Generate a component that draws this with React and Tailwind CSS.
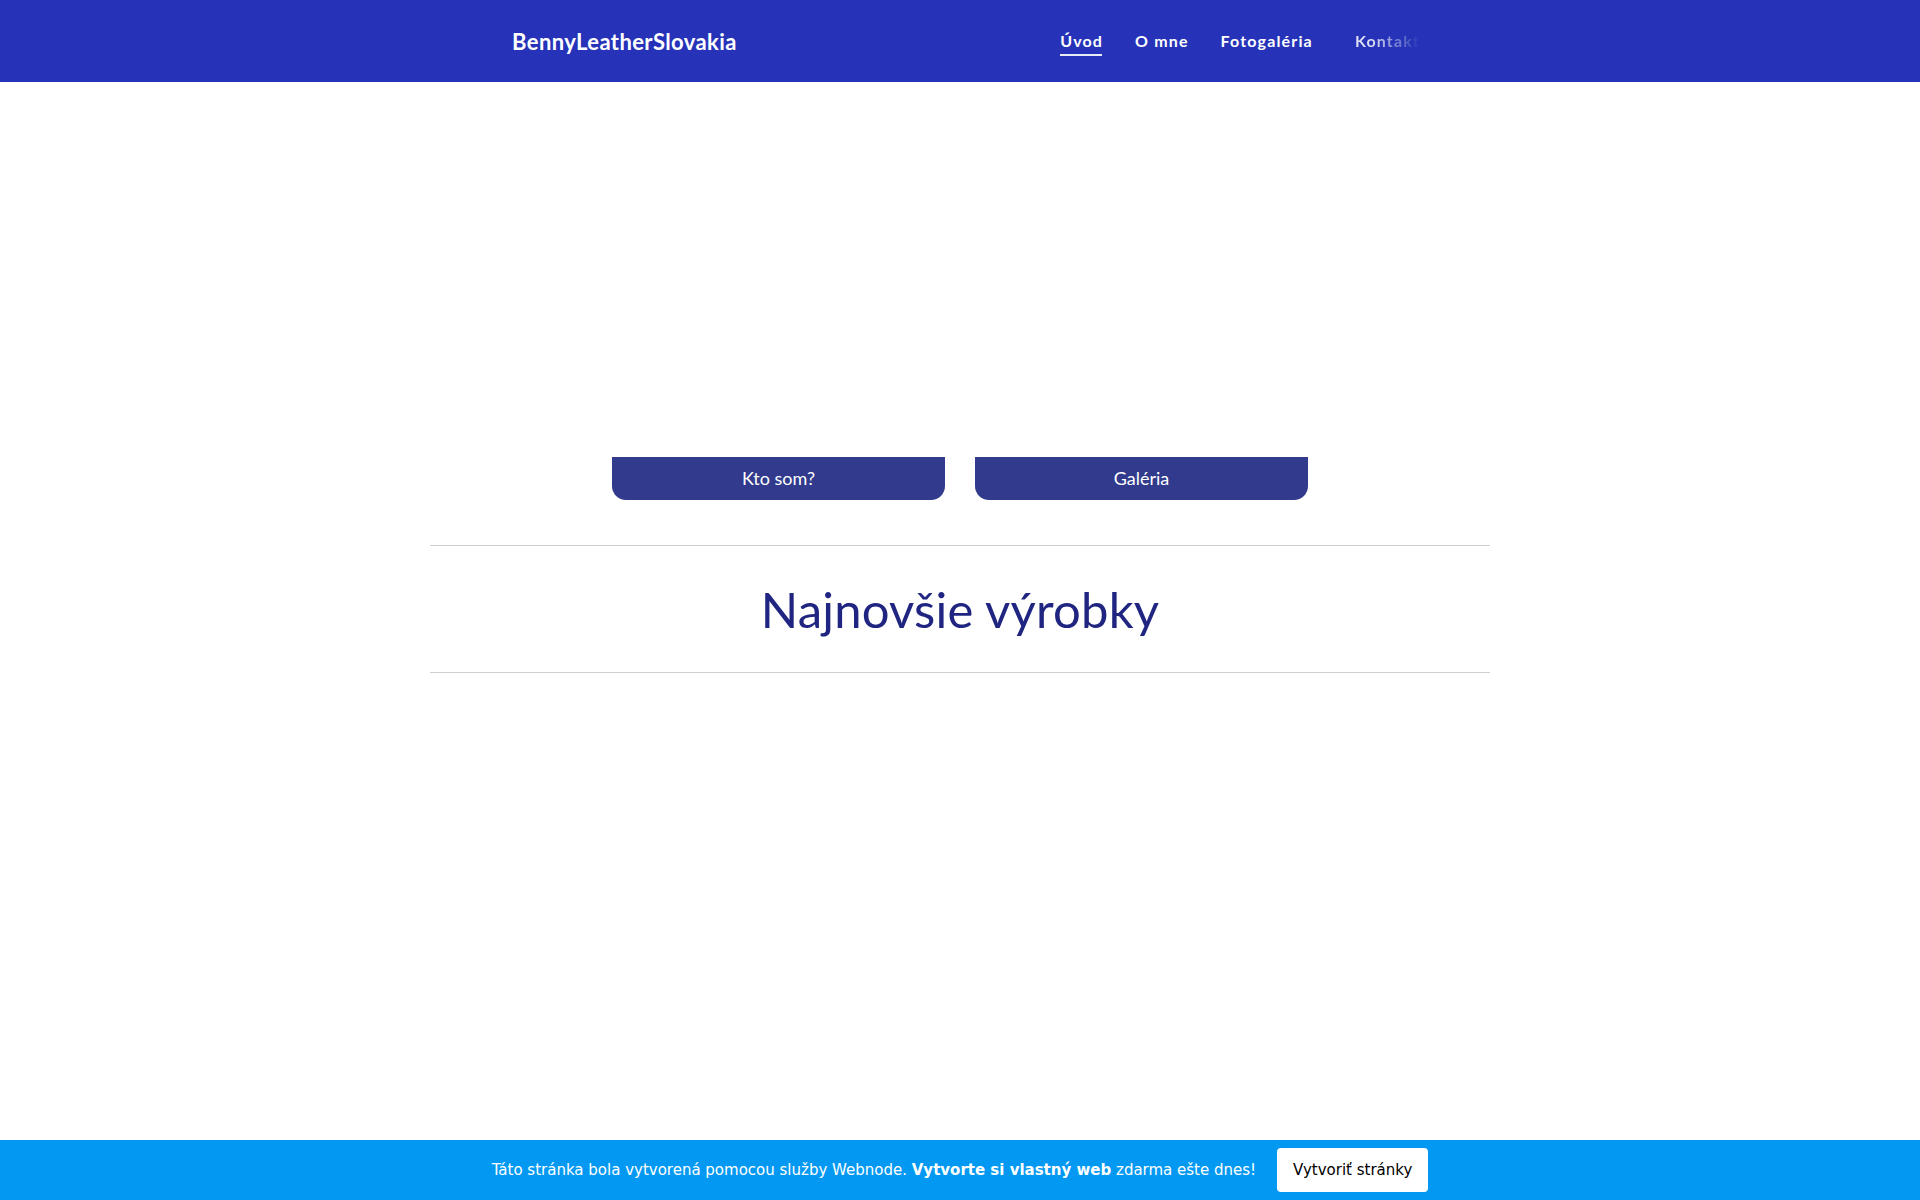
export default function App() {
  return (
    <div className="min-h-[1200px] w-full bg-white flex flex-col font-['Lato','Noto_Sans',sans-serif]">
      <header className="h-[82px] bg-[#2633b8] flex items-center">
        <div className="w-[1060px] mx-auto flex items-center pl-[82px]">
          <div className="text-white font-bold text-[22px] tracking-[0.4px]">BennyLeatherSlovakia</div>
          <nav className="ml-auto flex items-center gap-[32px] pr-[70px] text-white font-bold text-[16px] tracking-[1.15px]">
            <a className="relative">Úvod<span className="absolute left-0 right-[1px] -bottom-[3px] h-[2px] bg-white/90"></span></a>
            <a>O mne</a>
            <a className="pr-[10px]">Fotogaléria</a>
            <a className="bg-[linear-gradient(90deg,rgba(255,255,255,0.85)_25%,rgba(255,255,255,0)_100%)] bg-clip-text text-transparent">Kontakt</a>
          </nav>
        </div>
      </header>
      <main className="flex-1 flex flex-col items-center">
        <div className="h-[375px]"></div>
        <div className="flex gap-[30px]">
          <a className="w-[333px] h-[43px] bg-[#313a8c] rounded-b-[14px] flex items-center justify-center text-white text-[18px]">Kto som?</a>
          <a className="w-[333px] h-[43px] bg-[#313a8c] rounded-b-[14px] flex items-center justify-center text-white text-[18px]">Galéria</a>
        </div>
        <div className="w-[1060px] mt-[45px] border-t border-[#cfcfcf]"></div>
        <h2 className="h-[126px] flex items-center justify-center text-[#1f2580] text-[49px] leading-none tracking-[0.2px]">Najnovšie výrobky</h2>
        <div className="w-[1060px] border-t border-[#cfcfcf]"></div>
      </main>
      <footer className="h-[60px] bg-[#0399f2] flex items-center justify-center gap-[21px] font-['DejaVu_Sans',sans-serif]">
        <p className="text-white text-[15px]">Táto stránka bola vytvorená pomocou služby Webnode. <b>Vytvorte si vlastný web</b> zdarma ešte dnes!</p>
        <a className="h-[44px] px-[16px] bg-white rounded-[4px] flex items-center text-black text-[15px]">Vytvoriť stránky</a>
      </footer>
    </div>
  );
}
